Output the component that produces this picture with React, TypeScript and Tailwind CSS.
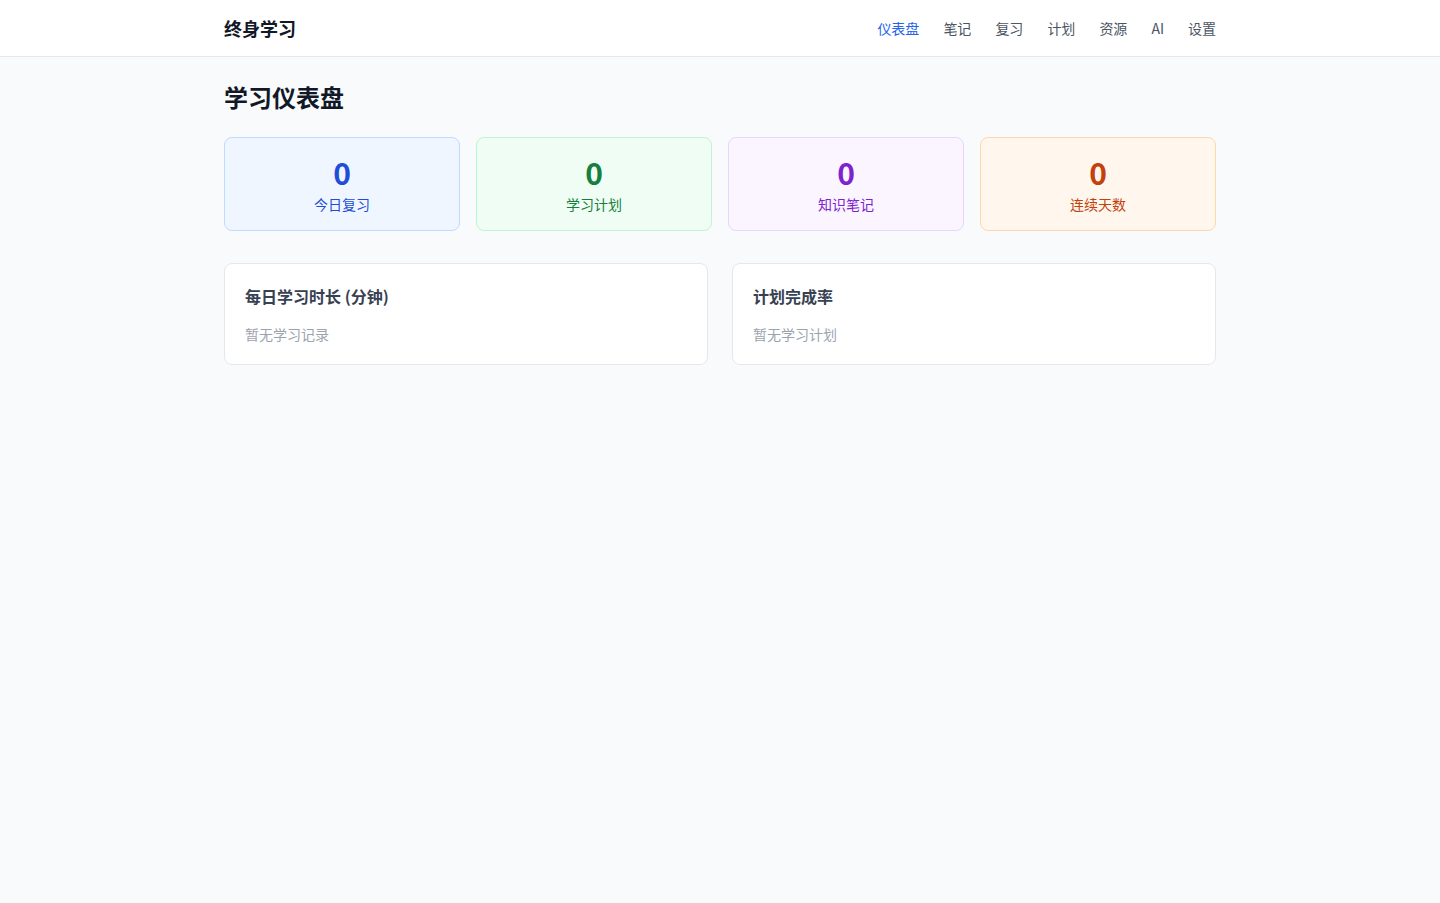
import React from 'react';

const navItems = ['仪表盘', '笔记', '复习', '计划', '资源', 'AI', '设置'];

const stats = [
  { label: '今日复习', value: 0, box: 'bg-[#eff6ff] border-[#bfdbfe]', text: 'text-[#1d4ed8]' },
  { label: '学习计划', value: 0, box: 'bg-[#f0fdf4] border-[#bbf7d0]', text: 'text-[#15803d]' },
  { label: '知识笔记', value: 0, box: 'bg-[#faf5ff] border-[#e9d5ff]', text: 'text-[#7e22ce]' },
  { label: '连续天数', value: 0, box: 'bg-[#fff7ed] border-[#fed7aa]', text: 'text-[#c2410c]' },
];

const panels = [
  { title: '每日学习时长 (分钟)', empty: '暂无学习记录' },
  { title: '计划完成率', empty: '暂无学习计划' },
];

export default function App() {
  return (
    <div
      className="min-h-screen bg-[#f9fafb]"
      style={{ fontFamily: '"Noto Sans CJK SC", sans-serif' }}
    >
      {/* Header */}
      <header className="bg-white border-b border-[#e5e7eb]">
        <div className="max-w-5xl mx-auto px-4 h-14 flex items-center justify-between">
          <span className="text-lg font-bold text-[#111827]">终身学习</span>
          <nav className="flex items-center gap-6">
            {navItems.map((item, i) => (
              <a
                key={item}
                className={`text-sm ${i === 0 ? 'text-[#2563eb]' : 'text-[#4b5563]'}`}
              >
                {item}
              </a>
            ))}
          </nav>
        </div>
      </header>

      {/* Main */}
      <main className="max-w-5xl mx-auto px-4 py-6">
        <h1 className="text-2xl font-bold text-[#111827] mb-6">学习仪表盘</h1>

        <div className="grid grid-cols-4 gap-4 mb-8">
          {stats.map((s) => (
            <div key={s.label} className={`border rounded-lg p-4 text-center ${s.box}`}>
              <div className={`text-3xl font-bold ${s.text}`}>{s.value}</div>
              <div className={`text-sm mt-1 ${s.text}`}>{s.label}</div>
            </div>
          ))}
        </div>

        <div className="grid grid-cols-2 gap-6">
          {panels.map((p) => (
            <div key={p.title} className="bg-white border border-[#e5e7eb] rounded-lg p-5">
              <h2 className="text-base font-semibold text-[#374151] mb-4">{p.title}</h2>
              <p className="text-sm text-[#9ca3af]">{p.empty}</p>
            </div>
          ))}
        </div>
      </main>
    </div>
  );
}
